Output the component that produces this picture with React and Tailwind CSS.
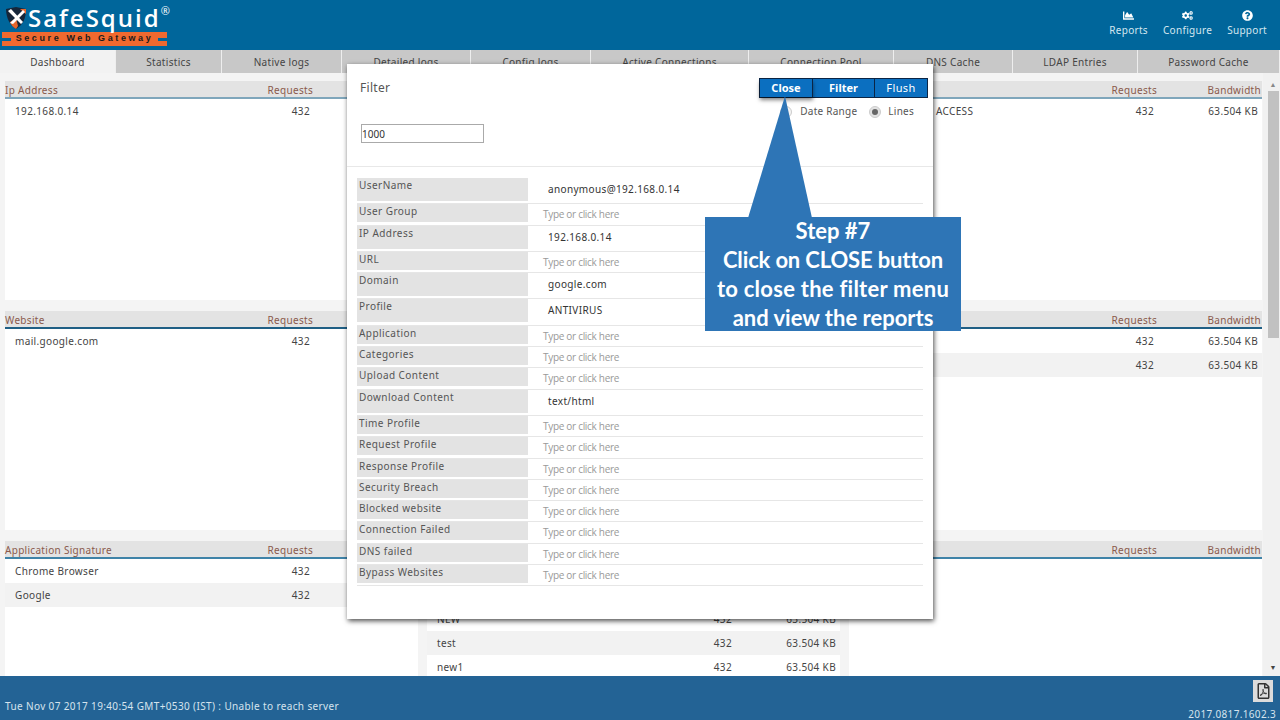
import React from "react";
import { FaChartArea, FaCogs, FaQuestionCircle, FaRegFilePdf } from "react-icons/fa";

const tabs = [
  { name: "Dashboard", width: "w-[116px]", active: true },
  { name: "Statistics", width: "w-[106px]" },
  { name: "Native logs", width: "w-[120px]" },
  { name: "Detailed logs", width: "w-[129px]" },
  { name: "Config logs", width: "w-[120px]" },
  { name: "Active Connections", width: "w-[158px]" },
  { name: "Connection Pool", width: "w-[145px]" },
  { name: "DNS Cache", width: "w-[119px]" },
  { name: "LDAP Entries", width: "w-[125px]" },
  { name: "Password Cache", width: "w-[142px]" },
];

const navItems = [
  { name: "Reports", Icon: FaChartArea },
  { name: "Configure", Icon: FaCogs },
  { name: "Support", Icon: FaQuestionCircle },
];

const panels = [
  { title: "Ip Address", line: "border-[#7fa6bb]", rows: ["192.168.0.14"] },
  { title: "User Group", line: "border-[#7fa6bb]", rows: ["anonymous"] },
  { title: "Profile", line: "border-[#7fa6bb]", rows: ["ACCESS"], indent: "pl-[87px]" },
  { title: "Website", line: "border-[#1f5f85]", rows: ["mail.google.com"] },
  { title: "Domain", line: "border-[#1f5f85]", rows: ["google.com"] },
  { title: "Categories", line: "border-[#1f5f85]", rows: ["Search", "Mail"] },
  { title: "Application Signature", line: "border-[#3f83a8]", rows: ["Chrome Browser", "Google"] },
  { title: "Profile Name", line: "border-[#3f83a8]", rows: ["ANTIVIRUS", "ACCESS", "NEW", "test", "new1"] },
  { title: "Security Breach", line: "border-[#3f83a8]", rows: [] },
];

const filters = [
  { label: "UserName", value: "anonymous@192.168.0.14" },
  { label: "User Group" },
  { label: "IP Address", value: "192.168.0.14" },
  { label: "URL" },
  { label: "Domain", value: "google.com" },
  { label: "Profile", value: "ANTIVIRUS" },
  { label: "Application" },
  { label: "Categories" },
  { label: "Upload Content" },
  { label: "Download Content", value: "text/html" },
  { label: "Time Profile" },
  { label: "Request Profile" },
  { label: "Response Profile" },
  { label: "Security Breach" },
  { label: "Blocked website" },
  { label: "Connection Failed" },
  { label: "DNS failed" },
  { label: "Bypass Websites" },
];

function Logo() {
  return (
    <div className="w-[170px] pl-[2px] pt-[3px]">
      <div className="flex items-start h-[28px]">
        <svg width="23" height="24" viewBox="0 0 23 24" className="ml-[3px] mt-[3px] shrink-0">
          <path d="M1 3 L11 1 L21 3 C21 12 18 19 11 23 C5 19 1 12 1 3 Z" fill="#16263a" />
          <path d="M5 16 L11 12 L13 20 L11 23 C8 21 6 19 5 16 Z" fill="#e8662c" />
          <path d="M15 3 L21 3 L21 8 Z" fill="#e8662c" />
          <path d="M3 5 L6 3 L18 16 L16 18 Z" fill="#ffffff" />
          <path d="M18 4 L20 6 L8 18 L5 17 Z" fill="#ffffff" />
        </svg>
        <span className="font-['Open_Sans',sans-serif] text-[24px] leading-[30px] font-semibold tracking-[2px] text-white">SafeSquid</span>
        <span className="font-['Open_Sans',sans-serif] text-[11px] leading-[12px] text-white mt-[2px]">®</span>
      </div>
      <div className="flex items-center justify-between h-[14px] mt-[1px] bg-[#f0692f] w-[165px]">
        <span className="w-[9px] h-[3px] bg-[#00669b]"></span>
        <span className="font-['Liberation_Sans',sans-serif] text-[9px] font-bold tracking-[2.6px] text-[#1c1c1c]">Secure Web Gateway</span>
        <span className="w-[9px] h-[3px] bg-[#00669b]"></span>
      </div>
    </div>
  );
}

function Panel({ panel }) {
  return (
    <div className="h-[219px] bg-white">
      <div className={`flex h-[18px] items-center pt-[2px] bg-[#e3e3e3] border-b-2 ${panel.line} text-[10px] tracking-[0.3px] text-[#8a5a4c]`}>
        <span className="flex-1">{panel.title}</span>
        <span className="w-[60px] text-right">Requests</span>
        <span className="w-[105px] text-right pr-[1px]">Bandwidth</span>
      </div>
      {panel.rows.map((row, index) => (
        <div key={index} className={`flex h-[24px] items-center text-[10px] tracking-[0.35px] text-[#444] ${index % 2 === 1 ? "bg-[#f2f2f2]" : "bg-white"}`}>
          <span className={`flex-1 ${panel.indent ? panel.indent : "pl-[10px]"}`}>{row}</span>
          <span className="w-[60px] text-right">432</span>
          <span className="w-[108px] text-right pr-[4px]">63.504 KB</span>
        </div>
      ))}
    </div>
  );
}

function FilterRow({ filter }) {
  return (
    <div className={`flex items-start border-b border-[#e6e6e6] ${filter.value ? "h-[26.3px]" : "h-[21.3px]"}`}>
      <div className={`w-[171px] bg-[#e3e3e3] pl-[2px] text-[10px] leading-[14px] tracking-[0.45px] text-[#555] ${filter.value ? "h-[23px]" : "h-[18px]"}`}>
        {filter.label}
      </div>
      {filter.value ? (
        <div className="pl-[20px] text-[10px] leading-[23px] tracking-[0.35px] text-[#333]">{filter.value}</div>
      ) : (
        <div className="pl-[15px] font-['Open_Sans',sans-serif] text-[10px] leading-[20px] tracking-[-0.3px] text-[#999]">Type or click here</div>
      )}
    </div>
  );
}

function FilterModal() {
  return (
    <div className="absolute left-[347px] top-[64px] w-[586px] h-[555px] bg-white shadow-[1px_2px_5px_rgba(0,0,0,0.7)]">
      <div className="relative h-[103px] border-b border-[#e8e8e8]">
        <div className="pl-[13px] pt-[16px] text-[12px] leading-[16px] tracking-[0.3px] text-[#555]">Filter</div>
        <input
          readOnly
          value="1000"
          className="block ml-[14px] mt-[28px] w-[123px] h-[19px] border border-[#aaa] text-[10px] text-[#333] outline-none"
        />
        <div className="absolute right-[5px] top-[14px] flex h-[20px] border border-[#0b2545] bg-[#0b6fc0] text-[11px] text-white">
          <button className="w-[53px] font-bold shadow-[0_3px_4px_rgba(0,0,0,0.5)] border-r border-[#0b2545]">Close</button>
          <button className="w-[62px] font-bold border-r border-[#0b2545]">Filter</button>
          <button className="w-[52px] tracking-[0.4px]">Flush</button>
        </div>
        <div className="absolute right-[19px] top-[40px] flex items-center text-[10px] tracking-[0.25px] text-[#555]">
          <span className="w-[12px] h-[12px] rounded-full border border-[#ccc] bg-[#f4f4f4]"></span>
          <span className="ml-[8px]">Date Range</span>
          <span className="ml-[12px] flex items-center justify-center w-[12px] h-[12px] rounded-full border border-[#ccc] bg-[#e2e2e2]">
            <span className="w-[6px] h-[6px] rounded-full bg-[#666]"></span>
          </span>
          <span className="ml-[7px]">Lines</span>
        </div>
      </div>
      <div className="w-[566px] ml-[10px] mt-[11px]">
        {filters.map((filter) => (
          <FilterRow key={filter.label} filter={filter} />
        ))}
      </div>
    </div>
  );
}

function Callout() {
  return (
    <>
      <svg className="absolute left-[740px] top-[96px]" width="80" height="122" viewBox="0 0 80 122">
        <polygon points="45,0 8,122 72,122" fill="#2e75b6" />
      </svg>
      <div className="absolute left-[705px] top-[217px] w-[256px] h-[114px] bg-[#2e75b6] text-center font-['Lato',sans-serif] text-[22px] leading-[29px] font-bold text-white">
        <p className="-mt-[1px]">Step #7</p>
        <p className="tracking-[-0.15px]">Click on CLOSE button</p>
        <p className="tracking-[0.25px]">to close the filter menu</p>
        <p>and view the reports</p>
      </div>
    </>
  );
}

export default function App() {
  return (
    <div className="relative flex flex-col h-screen overflow-hidden bg-[#f4f4f4] font-['Noto_Sans',sans-serif]">
      {/* Top bar */}
      <header className="flex justify-between h-[50px] shrink-0 bg-[#00669b]">
        <Logo />
        <nav className="flex gap-[15px] pr-[13px] pt-[10px]">
          {navItems.map(({ name, Icon }) => (
            <div key={name} className="flex flex-col items-center text-[10px] leading-[14px] tracking-[0.3px] text-[#d4e6f0]">
              <Icon className="w-[11px] h-[11px] mb-[2px] text-white" />
              {name}
            </div>
          ))}
        </nav>
      </header>

      {/* Tabs */}
      <div className="flex h-[23px] shrink-0 bg-[#c8c8c8] pt-[1px] text-[10px] tracking-[0.3px] text-[#444]">
        {tabs.map((tab) => (
          <div
            key={tab.name}
            className={`flex items-center justify-center -mt-[1px] pt-[1px] border-r border-[#eee] ${tab.width} ${tab.active ? "bg-[#f2f2f2]" : ""}`}
          >
            {tab.name}
          </div>
        ))}
      </div>

      {/* Report panels */}
      <div className="flex flex-1 min-h-0 pt-[8px]">
        <main className="grid grid-cols-3 gap-x-[9px] gap-y-[11px] content-start w-[1263px] pl-[5px] pr-[1px] overflow-hidden">
          {panels.map((panel) => (
            <Panel key={panel.title} panel={panel} />
          ))}
        </main>
        <div className="flex flex-col items-center flex-1 bg-[#f1f1f1] pl-[3px] -mt-[8px] pt-[7px]">
          <span className="h-[10px] text-[7px] leading-[10px] text-[#888]">▲</span>
          <div className="w-[11px] h-[247px] mt-[1px] bg-[#c1c1c1]"></div>
          <span className="mt-auto mb-[3px] h-[10px] text-[7px] leading-[10px] text-[#444]">▼</span>
        </div>
      </div>

      {/* Status bar */}
      <footer className="flex justify-between h-[44px] shrink-0 bg-[#236395] text-[10px] text-[#d6e4ee]">
        <div className="pl-[5px] pt-[23px] leading-[14px] tracking-[0.37px]">
          Tue Nov 07 2017 19:40:54 GMT+0530 (IST) : Unable to reach server
        </div>
        <div className="flex flex-col items-end pr-[4px] pt-[4px]">
          <div className="flex items-center justify-center w-[20px] h-[22px] mr-[3px] bg-[#dcdcdc]">
            <FaRegFilePdf className="w-[13px] h-[16px] text-[#333]" />
          </div>
          <div className="mt-[6px] leading-[12px] tracking-[0.33px]">2017.0817.1602.3</div>
        </div>
      </footer>

      <FilterModal />
      <Callout />
    </div>
  );
}
